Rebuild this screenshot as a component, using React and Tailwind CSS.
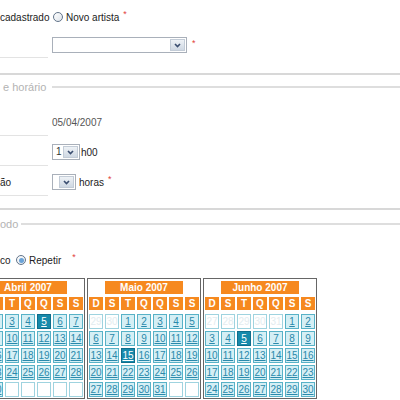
import React from "react";

const Star = ({ className = "" }) => (
  <span className={`text-[#e2403b] text-[9px] leading-none relative -top-[3px] ${className}`}>*</span>
);

function Radio({ checked }) {
  return (
    <span className="w-[10px] h-[10px] shrink-0 rounded-full border border-[#62748a] bg-gradient-to-br from-white to-[#dde3ea] flex items-center justify-center">
      {checked && <span className="w-[5px] h-[5px] rounded-full bg-[#6aa3d8]" />}
    </span>
  );
}

function Select({ width, value }) {
  return (
    <div className={`flex h-[16px] border border-[#a9b0ba] bg-white ${width}`}>
      <span className="flex-1 pl-[3px] leading-[14px] text-[#333]">{value}</span>
      <span className="w-[15px] m-[1px] border border-[#c3ccd7] bg-gradient-to-b from-[#eef2f6] to-[#cfd8e3] flex items-center justify-center">
        <svg width="7" height="5" viewBox="0 0 7 5">
          <polyline points="1,1 3.5,3.6 6,1" fill="none" stroke="#3b4e70" strokeWidth="1.6" />
        </svg>
      </span>
    </div>
  );
}

const WEEK = ["D", "S", "T", "Q", "Q", "S", "S"];

function Calendar({ title, lead, total, selected }) {
  const cells = [];
  lead.forEach((d) => cells.push({ d, faint: true }));
  for (let i = 1; i <= total; i++) cells.push({ d: i });
  while (cells.length < 35) cells.push({ d: null });

  return (
    <div className="w-[114px] shrink-0 border border-[#666] px-[1px] pt-[2px] pb-[1px]">
      <div className="grid grid-cols-7 gap-x-[2px]">
        <div />
        <div className="col-span-5 h-[13px] bg-[#f6891f] text-white font-bold text-center leading-[13px]">
          {title}
        </div>
        <div />
      </div>
      <div className="grid grid-cols-7 gap-x-[2px] mt-[3px]">
        {WEEK.map((w, i) => (
          <div key={i} className="h-[13px] bg-[#f6891f] text-white font-bold text-center leading-[13px]">
            {w}
          </div>
        ))}
      </div>
      <div className="grid grid-cols-7 gap-x-[2px] gap-y-[2px] mt-[4px]">
        {cells.map((c, i) => {
          if (c.faint || c.d === null)
            return (
              <div key={i} className="h-[15px] border border-[#9fd3df] bg-white text-center leading-[13px] text-[#e3ecef]">
                {c.d}
              </div>
            );
          const sel = c.d === selected;
          return (
            <div
              key={i}
              className={`h-[15px] border text-center leading-[13px] underline ${
                sel
                  ? "bg-[#178aab] border-[#0f6d8b] text-white"
                  : "bg-[#d5eff5] border-[#58b2c7] text-[#2a89ab]"
              }`}
            >
              {c.d}
            </div>
          );
        })}
      </div>
    </div>
  );
}

export default function App() {
  return (
    <div className="w-[400px] h-[400px] overflow-hidden bg-white text-[10px] text-[#222] font-['Liberation_Sans',Arial,sans-serif]">
      {/* Tipo de artista */}
      <div className="flex items-center h-[14px] mt-[10px]">
        <span className="w-[53px] shrink-0 text-right pr-[6px] whitespace-nowrap">cadastrado</span>
        <Radio />
        <span className="ml-[3px]">Novo artista</span>
        <Star className="ml-[4px]" />
      </div>

      <div className="flex mt-[3px]">
        <div className="w-[48px] h-[31px] border-b border-[#e3e3e3]" />
        <div className="ml-[4px] pt-[10px] flex items-start">
          <Select width="w-[135px]" value="" />
          <Star className="ml-[5px] top-[2px]" />
        </div>
      </div>

      <div className="mt-[15px] h-[2px] bg-[#d8d8d8]" />

      {/* Data e horário */}
      <div className="flex items-center h-[14px] mt-[5px]">
        <span className="w-[52px] shrink-0 pl-[3px] text-[11px] text-[#b3b3b3] whitespace-nowrap">e horário</span>
        <div className="flex-1 h-[2px] bg-[#dedede]" />
      </div>

      <div className="flex">
        <div className="w-[48px] h-[42px] border-b border-[#e3e3e3]" />
        <div className="ml-[4px] pt-[23px] leading-[12px] text-[#555]">05/04/2007</div>
      </div>

      <div className="flex">
        <div className="w-[48px] h-[30px] border-b border-[#e3e3e3]" />
        <div className="ml-[4px] pt-[8px] flex items-center h-[24px]">
          <Select width="w-[28px]" value="1" />
          <span className="ml-[1px]">h00</span>
        </div>
      </div>

      <div className="flex">
        <div className="w-[48px] h-[30px] border-b border-[#e3e3e3] pt-[11px] leading-[12px]">ão</div>
        <div className="ml-[4px] pt-[8px] flex items-center h-[24px]">
          <Select width="w-[24px]" value="" />
          <span className="ml-[3px]">horas</span>
          <Star className="ml-[4px]" />
        </div>
      </div>

      <div className="mt-[12px] h-[2px] bg-[#d8d8d8]" />

      {/* Período */}
      <div className="flex items-center h-[14px] mt-[7px]">
        <span className="w-[21px] shrink-0 text-[11px] text-[#b3b3b3]">odo</span>
        <div className="flex-1 h-[2px] bg-[#dedede]" />
      </div>

      <div className="flex items-center h-[14px] mt-[22px]">
        <span className="w-[16px] shrink-0">co</span>
        <Radio checked />
        <span className="ml-[3px]">Repetir</span>
        <Star className="ml-[11px]" />
      </div>

      <div className="flex gap-[2px] mt-[11px] -ml-[29px]">
        <Calendar title="Abril 2007" lead={[]} total={30} selected={5} />
        <Calendar title="Maio 2007" lead={[29, 30]} total={31} selected={15} />
        <Calendar title="Junho 2007" lead={[27, 28, 29, 30, 31]} total={30} selected={5} />
      </div>
    </div>
  );
}
